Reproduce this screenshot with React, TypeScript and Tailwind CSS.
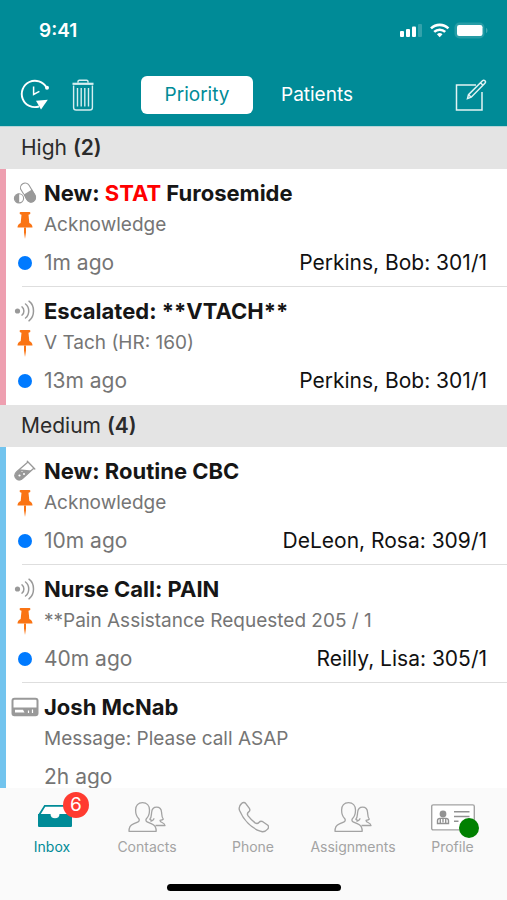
import { useState } from "react";
import type { ReactNode } from "react";

type IconKind = "pills" | "signal" | "tube" | "pager";

interface Message {
  id: number;
  icon: IconKind;
  title: ReactNode;
  detail: string;
  age: string;
  patient?: string;
  pinned?: boolean;
}

interface Section {
  label: string;
  count: number;
  band: string;
  messages: Message[];
}

const sections: Section[] = [
  {
    label: "High",
    count: 2,
    band: "border-[#ee9fb0]",
    messages: [
      {
        id: 1,
        icon: "pills",
        title: (
          <>
            New: <span className="text-[#ff0000]">STAT</span> Furosemide
          </>
        ),
        detail: "Acknowledge",
        age: "1m ago",
        patient: "Perkins, Bob: 301/1",
        pinned: true,
      },
      {
        id: 2,
        icon: "signal",
        title: "Escalated: **VTACH**",
        detail: "V Tach (HR: 160)",
        age: "13m ago",
        patient: "Perkins, Bob: 301/1",
        pinned: true,
      },
    ],
  },
  {
    label: "Medium",
    count: 4,
    band: "border-[#72c4ee]",
    messages: [
      {
        id: 3,
        icon: "tube",
        title: "New: Routine CBC",
        detail: "Acknowledge",
        age: "10m ago",
        patient: "DeLeon, Rosa: 309/1",
        pinned: true,
      },
      {
        id: 4,
        icon: "signal",
        title: "Nurse Call: PAIN",
        detail: "**Pain Assistance Requested 205 / 1",
        age: "40m ago",
        patient: "Reilly, Lisa: 305/1",
        pinned: true,
      },
      {
        id: 5,
        icon: "pager",
        title: "Josh McNab",
        detail: "Message: Please call ASAP",
        age: "2h ago",
      },
    ],
  },
];

const StatusIcons = () => (
  <svg width="88" height="18" viewBox="0 0 88 18" fill="#fff" aria-hidden="true">
    <rect x="0" y="9" width="4" height="6" rx="1" />
    <rect x="6" y="7" width="4" height="8" rx="1" />
    <rect x="12" y="4.5" width="4" height="10.5" rx="1" />
    <rect x="18" y="2" width="4" height="13" rx="1" opacity="0.2" />
    <g fill="none" stroke="#fff" strokeWidth="2.6">
      <path d="M31 6.400a12.500 12.500 0 0 1 17.400 0" />
      <path d="M34.200 9.900a8 8 0 0 1 11 0" />
    </g>
    <path d="M36.900 12.200a4.200 4.200 0 0 1 5.600 0L39.700 15.200z" />
    <rect x="54.500" y="0.500" width="30" height="16" rx="5" opacity="0.15" />
    <path d="M86 6c2 .6 2 4.400 0 5z" opacity="0.25" />
    <rect x="57" y="3" width="25.500" height="11" rx="2.200" />
  </svg>
);

const HistoryIcon = () => (
  <svg width="30" height="32" viewBox="0 0 30 32" fill="none" stroke="#fff" strokeWidth="1.900">
    <path d="M26.500 8.500A13.200 13.200 0 1 0 19 27.500" />
    <circle cx="27" cy="8.800" r="2" fill="#fff" stroke="none" />
    <path d="M16 21.700l11.800-.9-6.800 9.700z" fill="#fff" stroke="none" />
    <path d="M13.600 7.500v8l5.800-3.200" strokeWidth="1.500" />
  </svg>
);

const TrashIcon = () => (
  <svg width="22" height="32" viewBox="0 0 22 32" fill="none" stroke="#d5eef0" strokeWidth="1.400">
    <path d="M6 3.800V2.600c0-.9.500-1.400 1.400-1.400h7.200c.9 0 1.400.5 1.400 1.400v1.200" />
    <path d="M0.500 4.800h21" strokeWidth="2.200" />
    <path d="M1.600 6.400v22c0 1.700.9 2.600 2.600 2.600h13.600c1.700 0 2.600-.9 2.600-2.600v-22" />
    <path d="M5.500 9v18.500M9.200 9v18.500M12.800 9v18.500M16.500 9v18.500" />
  </svg>
);

const ComposeIcon = () => (
  <svg width="32" height="32" viewBox="0 0 32 32" fill="none" stroke="#e2f3f4" strokeWidth="1.500">
    <path d="M21 6H1.500v25H27V13" />
    <path d="M12.500 19.600l1-4L27.500 1.800c.8-.8 1.600-.8 2.400 0s.8 1.600 0 2.400L16.200 18.200zM13.500 15.600l2.700 2.600M25.500 3.800l2.500 2.500" strokeWidth="1.500" />
  </svg>
);

const PillsIcon = () => (
  <svg width="24" height="22" viewBox="0 0 24 22" aria-hidden="true">
    <g transform="rotate(-31 15 10.500)">
      <rect x="10.400" y="0.300" width="9.200" height="20.600" rx="4.600" fill="#fff" stroke="#999" strokeWidth="1.100" />
      <path d="M10 10h10v6.200a5 5 0 0 1-10 0z" fill="#999" />
    </g>
    <circle cx="6" cy="16.300" r="5.800" fill="#fff" />
    <circle cx="6" cy="16.300" r="4.600" fill="#fff" stroke="#999" strokeWidth="1.100" />
    <path d="M6.200 11.600a4.700 4.700 0 0 0 0 9.400z" fill="#999" />
  </svg>
);

const SignalIcon = () => (
  <svg width="22" height="22" viewBox="0 0 22 22" fill="none" stroke="#999" strokeWidth="1.500" strokeLinecap="round" aria-hidden="true">
    <circle cx="3.500" cy="11" r="2.600" fill="#999" stroke="none" />
    <path d="M8 6.800c2.500 1.600 2.500 6.800 0 8.400M11.500 4c4.300 3.200 4.300 10.800 0 14M15 1.200c6 4.500 6 15.100 0 19.600" />
  </svg>
);

const TubeIcon = () => (
  <svg width="22" height="22" viewBox="0 0 22 22" aria-hidden="true">
    <path
      d="M13.300 1.300l7.500 7.700M14 2.100L2.700 11.800c-2.200 2.100-2.300 4.800-.5 6.700s4.500 1.900 6.500-.2L19.800 8.300"
      fill="none"
      stroke="#999"
      strokeWidth="1.300"
      strokeLinecap="round"
    />
    <path d="M5.500 9.300l12.100 1.200L8.700 18.800c-2 2-4.700 2-6.500 0s-1.700-4.800.5-6.900z" fill="#999" />
    <circle cx="5.500" cy="15.500" r="1.100" fill="#fff" />
    <circle cx="10" cy="14" r="1" fill="#fff" />
    <circle cx="8" cy="11.500" r="0.600" fill="#fff" />
  </svg>
);

const PagerIcon = () => (
  <svg width="28" height="20" viewBox="0 0 28 20" aria-hidden="true">
    <rect x="1.500" y="1.700" width="25" height="16.500" rx="2" fill="#fff" stroke="#999" strokeWidth="2" />
    <path d="M2 10.500h24v7.500H2z" fill="#999" />
    <path d="M4 12.800h8l1.500 2.700H4z" fill="#fff" />
    <path d="M17.500 13.500v2.500M21.500 12.500v3.500" stroke="#fff" strokeWidth="1.200" />
  </svg>
);

const messageIcons: Record<IconKind, ReactNode> = {
  pills: <PillsIcon />,
  signal: <SignalIcon />,
  tube: <TubeIcon />,
  pager: <PagerIcon />,
};

const PinIcon = () => (
  <svg width="16" height="28" viewBox="0 0 16 28" fill="#fa7414" aria-hidden="true">
    <path d="M3.500 1h9c.6 0 .8.300.8.800v.7c0 .8-.8 1.100-1.800 1.300l.8 8.200c2 .7 3.200 2.300 3.200 4.600H.500c0-2.300 1.200-3.900 3.200-4.600l.8-8.200c-1-.2-1.800-.5-1.800-1.300v-.7c0-.5.200-.8.800-.8z" />
    <path d="M7 16.600h2v5L8 28l-1-6.400z" />
  </svg>
);

const InboxIcon = () => (
  <svg width="42" height="26" viewBox="-6 0 42 26" aria-hidden="true">
    <path d="M1.800 11.500L7.800 1.800h20.400l6 9.700" fill="#fff" stroke="#008b97" strokeWidth="1.800" />
    <path d="M1 10h12.500c0 2.700 1.600 4.300 4.500 4.300s4.500-1.600 4.500-4.300H35v11.500c0 1-.5 1.500-1.500 1.500h-31C1.500 23 1 22.500 1 21.500z" fill="#008b97" />
  </svg>
);

const PeopleIcon = () => (
  <svg width="38" height="32" viewBox="0 0 38 32" fill="none" stroke="#a3a3a3" strokeWidth="1.300" strokeLinejoin="round" aria-hidden="true">
    <path d="M14.500 1.600c-4.300 0-6.900 3-6.900 7.400 0 4 1.200 6.800 3.200 8.700.8.900.5 2.600-.7 3.100l-5.200 2.300C2 24.300 1 26.500 1 30.300h27.200c0-3.800-1-6-3.900-7.200l-5.200-2.300c-1.300-.6-1.500-2.200-.7-3.100 2-1.900 3.100-4.700 3.100-8.700 0-4.400-2.700-7.400-7-7.400z" />
    <path d="M23.500 19.200c-.9-.4-1.400-.6-1.700-1.100 1.800-1.700 1.500-4 1.800-6.600.3-3.400 2.100-5.300 5-5.300s4.800 1.900 5 5.300c.2 2.800.1 5 1.700 6.600-.5.700-1.900 1-3.300 1.200 0 1.300.5 1.700 2 2.200 1.800.7 2.700 1.200 3 3h-9.500M26 17.300c0 1.200-.5 1.800-1.800 2.300l-1.700.9" />
  </svg>
);

const PhoneIcon = () => (
  <svg width="32" height="32" viewBox="-1 0 32 32" fill="none" stroke="#a3a3a3" strokeWidth="1.400" strokeLinejoin="round" aria-hidden="true">
    <path d="M3.500 2.600C5 1.200 6.600 1 7.800 2.600l3.400 4.600c1 1.400.8 2.700-.5 3.700-1.800 1.400-1.900 2.200-.6 4 2 2.600 4.300 4.900 7 7 1.700 1.200 2.600 1.100 4-.6 1-1.300 2.200-1.500 3.700-.6l4.700 3.300c1.500 1.200 1.400 2.600.1 4.100-2 2.400-4.400 3.200-7.400 2.100C13.500 27 5.600 19.100 1.700 9.800.6 7 1.300 4.500 3.500 2.600z" />
  </svg>
);

const ProfileIcon = () => (
  <svg width="44" height="27" viewBox="0 0 44 27" fill="none" stroke="#a3a3a3" strokeWidth="1.400" aria-hidden="true">
    <rect x="0.700" y="0.900" width="42.600" height="25" rx="1.500" fill="#fff" />
    <circle cx="12" cy="10" r="3.400" fill="#929292" stroke="none" />
    <path d="M6.500 19.500v-2.700c0-1.500.9-2.400 2.500-2.400h6c1.600 0 2.500.9 2.500 2.400v2.700z" fill="#fff" stroke="#929292" />
    <path d="M9.300 14.500v5M12 14.500v4M14.700 14.500v5" stroke="#929292" />
    <path d="M23 7.700h15.500M23 12.500h15.500M23 17.200h4.500" stroke="#929292" />
  </svg>
);

const MessageRow = ({ message, last }: { message: Message; last: boolean }) => (
  <li className="relative grid grid-cols-[38px_1fr] pt-1.5 pb-2">
    <div className="flex h-9 items-center justify-center">{messageIcons[message.icon]}</div>
    <h3 className="truncate text-[22px] leading-9 font-bold text-[#161616]">{message.title}</h3>

    <div className="flex h-7 justify-center">{message.pinned && <PinIcon />}</div>
    <p className="truncate text-[19px] leading-7 text-[#757575]">{message.detail}</p>

    <div className="mt-2 flex h-8 items-center justify-center">
      {message.pinned && <span className="size-[14px] rounded-full bg-[#007aff]" />}
    </div>
    <div className="mt-2 flex justify-between pr-5 text-[21px] leading-8">
      <span className="text-[#757575]">{message.age}</span>
      <span className="text-[#111]">{message.patient}</span>
    </div>
    {!last && <span className="absolute right-0 bottom-0 left-4 h-px bg-[#dedede]" />}
  </li>
);

const tabs = [
  { name: "Inbox", icon: <InboxIcon /> },
  { name: "Contacts", icon: <PeopleIcon /> },
  { name: "Phone", icon: <PhoneIcon /> },
  { name: "Assignments", icon: <PeopleIcon /> },
  { name: "Profile", icon: <ProfileIcon /> },
];

const App = () => {
  const [view, setView] = useState("Priority");
  const [tab, setTab] = useState("Inbox");

  return (
    <div className="flex h-screen flex-col overflow-hidden bg-white font-['Inter',sans-serif]">
      <header className="shrink-0 bg-[#008b97] text-white">
        {/* Status bar */}
        <div className="flex h-[62px] items-center justify-between pr-[19px] pl-[39px]">
          <span className="text-[19px] font-semibold">9:41</span>
          <StatusIcons />
        </div>

        {/* Toolbar */}
        <div className="flex h-16 items-center px-5 pt-0.5">
          <button type="button" aria-label="History">
            <HistoryIcon />
          </button>
          <button type="button" aria-label="Delete" className="ml-[22px]">
            <TrashIcon />
          </button>
          <div className="ml-[47px] flex">
            {["Priority", "Patients"].map((name) => (
              <button
                key={name}
                type="button"
                aria-pressed={view === name}
                onClick={() => setView(name)}
                className={
                  view === name
                    ? "h-[38px] w-28 rounded-md bg-white text-[19px] text-[#008b97]"
                    : "h-[38px] w-32 rounded-md text-[19px] text-white"
                }
              >
                {name}
              </button>
            ))}
          </div>
          <button type="button" aria-label="New message" className="ml-auto">
            <ComposeIcon />
          </button>
        </div>
      </header>

      <main className="min-h-0 flex-1 overflow-hidden border-t border-[#b5d5d8]">
        {sections.map((section) => (
          <section key={section.label}>
            <h2 className="h-[42px] bg-[#e4e4e4] pl-[21px] text-[21px] leading-[42px] text-[#2b2b2b]">
              {section.label} <span className="font-semibold">({section.count})</span>
            </h2>
            <ul className={`border-l-6 ${section.band}`}>
              {section.messages.map((message, i) => (
                <MessageRow key={message.id} message={message} last={i === section.messages.length - 1} />
              ))}
            </ul>
          </section>
        ))}
      </main>

      <nav className="flex h-28 shrink-0 flex-col justify-between bg-[#fafafa] pt-3 pb-[9px]">
        <div className="grid grid-cols-[88fr_102fr_110fr_90fr_109fr] pl-2">
          {tabs.map(({ name, icon }) => (
            <button
              key={name}
              type="button"
              onClick={() => setTab(name)}
              className={`flex flex-col items-center text-[14px] leading-5 ${tab === name ? "text-[#008b97]" : "text-[#a3a3a3]"}`}
            >
              <span className="relative mb-[3px] flex h-[34px] items-center">
                {icon}
                {name === "Inbox" && (
                  <span className="absolute -top-2 -right-4 size-[26px] rounded-full bg-[#ff3b30] text-[19px] leading-[26px] text-white">
                    6
                  </span>
                )}
                {name === "Profile" && (
                  <span className="absolute -right-1 -bottom-1 size-5 rounded-full bg-[#008000]" />
                )}
              </span>
              {name}
            </button>
          ))}
        </div>
        <span className="h-[7px] w-[174px] self-center rounded-full bg-black" />
      </nav>
    </div>
  );
};

export default App;
